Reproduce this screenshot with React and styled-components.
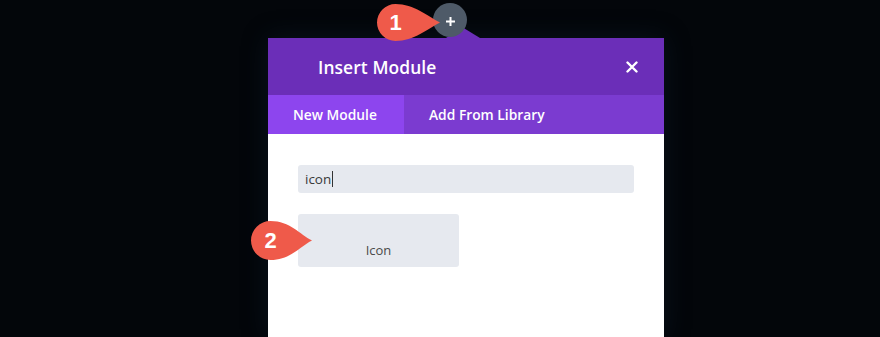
import React from 'react';
import styled, { createGlobalStyle } from 'styled-components';

const GlobalStyle = createGlobalStyle`
  html, body {
    margin: 0;
    padding: 0;
    background: #03060a;
    font-family: "Open Sans", "Liberation Sans", sans-serif;
  }
`;

const Stage = styled.div`
  position: relative;
  width: 880px;
  height: 337px;
  overflow: hidden;
  background: #03060a;
`;

const Modal = styled.div`
  position: relative;
  margin: 38px 0 0 268px;
  width: 396px;
  height: 299px;
  background: #fff;
  box-shadow: 0 0 24px rgba(20, 40, 60, 0.35);

  &::before {
    content: '';
    position: absolute;
    left: 178px;
    top: -11px;
    width: 0;
    height: 0;
    border-left: 16px solid transparent;
    border-right: 18px solid transparent;
    border-bottom: 11px solid #6b2eb8;
  }
`;

const Header = styled.div`
  display: flex;
  align-items: center;
  justify-content: space-between;
  height: 57px;
  padding: 0 26px 0 50px;
  background: #6b2eb8;
  color: #fff;
`;

const Title = styled.h2`
  margin: 0;
  font-size: 17.4px;
  font-weight: 600;
  letter-spacing: 0.1px;
`;

const Close = styled.button`
  display: flex;
  align-items: center;
  justify-content: center;
  padding: 0;
  border: 0;
  background: none;
  cursor: pointer;
`;

const Tabs = styled.div`
  display: flex;
  height: 39px;
  background: #7b3bd0;
`;

const Tab = styled.div`
  display: flex;
  align-items: center;
  box-sizing: border-box;
  width: ${p => (p.$active ? '136px' : 'auto')};
  padding: 0 25px;
  background: ${p => (p.$active ? '#8d45ee' : 'transparent')};
  color: #fff;
  font-size: 13.8px;
  font-weight: 600;
`;

const Body = styled.div`
  display: flex;
  flex-direction: column;
  gap: 21px;
  padding: 31px 30px 0;
`;

const Search = styled.div`
  display: flex;
  align-items: center;
  height: 28px;
  padding: 0 7px;
  border-radius: 3px;
  background: #e6e9ef;
  color: #3a3a3a;
  font-size: 13.5px;
`;

const Caret = styled.span`
  display: inline-block;
  width: 1px;
  height: 16px;
  margin-left: 1px;
  background: #333;
`;

const ModuleButton = styled.div`
  display: flex;
  align-items: flex-end;
  justify-content: center;
  width: 161px;
  height: 53px;
  box-sizing: border-box;
  padding-bottom: 8px;
  border-radius: 3px;
  background: #e6e9ef;
  color: #4a4a4a;
  font-size: 13px;
`;

const PlusDot = styled.div`
  position: absolute;
  left: 433px;
  top: 3px;
  width: 34px;
  height: 34px;
  border-radius: 50%;
  background: #4e5a68;
  display: flex;
  align-items: center;
  justify-content: center;
  padding-top: 2px;
  box-sizing: border-box;
`;

const Badge = styled.div`
  position: absolute;
  left: ${p => p.$x}px;
  top: ${p => p.$y}px;
  width: ${p => p.$w}px;
  height: ${p => p.$h}px;
`;

const BadgeNum = styled.span`
  position: absolute;
  left: 0;
  top: 0;
  width: ${p => p.$d}px;
  height: 100%;
  display: flex;
  align-items: center;
  justify-content: center;
  color: #fff;
  font-family: "Liberation Sans", Arial, sans-serif;
  font-weight: 700;
  font-size: 22px;
`;

function Teardrop({ x, y, w, h, n }) {
  const r = h / 2;
  return (
    <Badge $x={x} $y={y} $w={w} $h={h}>
      <svg width={w} height={h} viewBox={`0 0 ${w} ${h}`}>
        <path
          d={`M ${w} ${r} C ${w - 12} ${r - 6}, ${r * 2} 0, ${r} 0 A ${r} ${r} 0 0 0 ${r} ${h} C ${r * 2} ${h}, ${w - 12} ${r + 6}, ${w} ${r} Z`}
          fill="#ef5a4a"
        />
      </svg>
      <BadgeNum $d={h}>{n}</BadgeNum>
    </Badge>
  );
}

export default function App() {
  return (
    <Stage>
      <GlobalStyle />
      <Modal>
        <Header>
          <Title>Insert Module</Title>
          <Close aria-label="close">
            <svg width="12" height="12" viewBox="0 0 12 12">
              <path d="M1.5 1.5 L10.5 10.5 M10.5 1.5 L1.5 10.5" stroke="#fff" strokeWidth="2.4" strokeLinecap="round" />
            </svg>
          </Close>
        </Header>
        <Tabs>
          <Tab $active>New Module</Tab>
          <Tab>Add From Library</Tab>
        </Tabs>
        <Body>
          <Search>
            icon<Caret />
          </Search>
          <ModuleButton>Icon</ModuleButton>
        </Body>
      </Modal>
      <PlusDot>
        <svg width="11" height="11" viewBox="0 0 11 11">
          <path d="M5.5 1 V10 M1 5.5 H10" stroke="#fff" strokeWidth="2" />
        </svg>
      </PlusDot>
      <Teardrop x={377} y={4} w={63} h={37} n="1" />
      <Teardrop x={251} y={221} w={61} h={39} n="2" />
    </Stage>
  );
}
